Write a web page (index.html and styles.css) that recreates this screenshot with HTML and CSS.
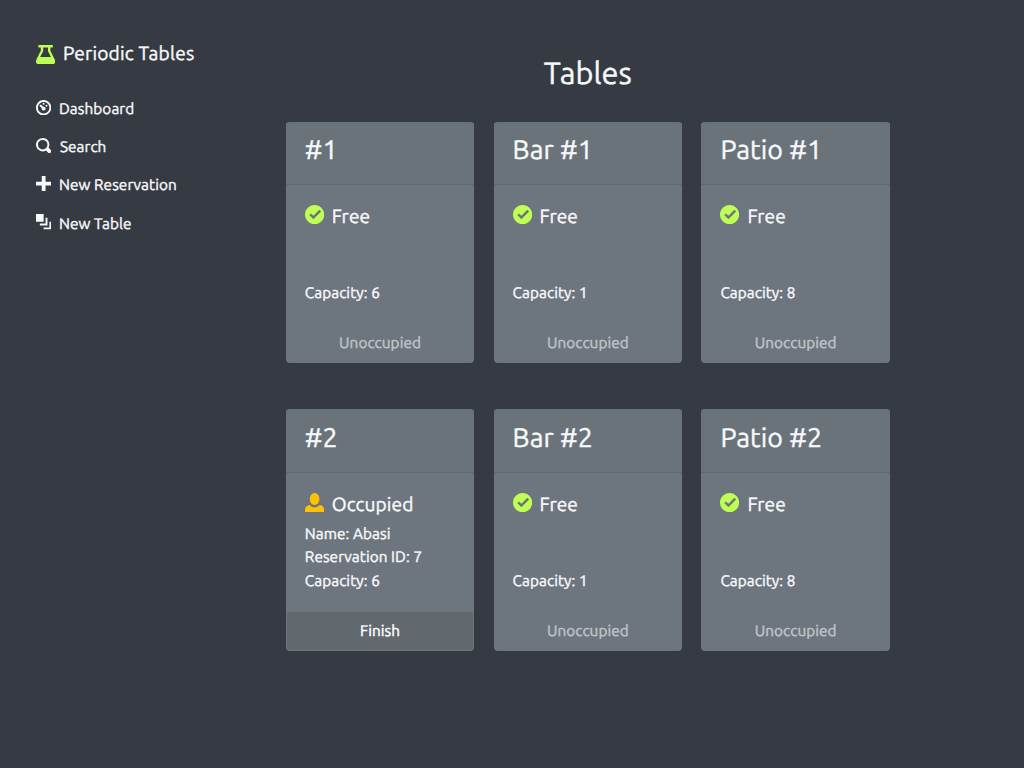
FILE: index.html
```
<!DOCTYPE html>
<html lang="en">
<head>
<meta charset="utf-8">
<title>Periodic Tables</title>
<link rel="stylesheet" href="styles.css">
</head>
<body>
<svg class="defs" aria-hidden="true">
  <symbol id="check" viewBox="0 0 8 8"><path fill-rule="evenodd" d="M4 0C1.790 0 0 1.790 0 4s1.790 4 4 4 4-1.790 4-4-1.790-4-4-4zm2 2l.72.720-3.220 3.220-1.720-1.720.72-.720 1 1z"/></symbol>
  <symbol id="person" viewBox="0 0 8 8"><path d="M4 0c-1.100 0-2 1.120-2 2.500s.9 2.500 2 2.500 2-1.120 2-2.500-.9-2.500-2-2.500zM1.910 5c-1.060.050-1.910.92-1.910 2v1h8v-1c0-1.080-.84-1.950-1.910-2-.54.610-1.280 1-2.090 1s-1.550-.39-2.090-1z"/></symbol>
</svg>
<div class="layout">
  <nav class="sidebar">
    <a class="brand"><svg class="icon-lg green" viewBox="0 0 8 8"><path fill-rule="evenodd" d="M1 0v1h1v1.410c-.28.550-1.440 2.890-1.780 3.560-.150.310-.22.640-.22 1.030 0 .550.450 1 1 1h6c.550 0 1-.450 1-1 0-.39-.070-.720-.22-1.030-.34-.67-1.500-3.010-1.780-3.560V1h1V0zm2 1h2v1.660l.060.090s.63 1.230 1.190 2.250h-4.500c.56-1.120 1.190-2.250 1.190-2.250l.060-.09z"/></svg><span>Periodic Tables</span></a>
    <a class="link"><svg class="icon" viewBox="0 0 8 8"><path d="M4 0C1.800 0 0 1.800 0 4s1.800 4 4 4 4-1.800 4-4-1.800-4-4-4zm0 1c1.660 0 3 1.340 3 3S5.660 7 4 7 1 5.660 1 4s1.340-3 3-3zm0 .5a.5.5 0 1 0 0 1 .5.5 0 0 0 0-1zM2.340 2.500a.5.500 0 0 0-.19.840l.9.910a1 1 0 1 0 .7-.700l-.91-.900a.5.5 0 0 0-.5-.15zM5.500 2.500a.5.5 0 1 0 0 1 .5.5 0 0 0 0-1z"/></svg><span>Dashboard</span></a>
    <a class="link search"><svg class="icon" viewBox="0 0 8 8"><path fill-rule="evenodd" d="M3.500 0a3.500 3.500 0 1 0 1.720 6.550l1.060 1.060A1 1 0 1 0 7.690 6.190L6.600 5.130A3.500 3.500 0 0 0 3.500 0zm0 1a2.500 2.500 0 1 1 0 5 2.500 2.500 0 0 1 0-5z"/></svg><span>Search</span></a>
    <a class="link"><svg class="icon" viewBox="0 0 8 8"><path d="M3 0v3H0v2h3v3h2V5h3V3H5V0z"/></svg><span>New Reservation</span></a>
    <a class="link"><svg class="icon" viewBox="0 0 8 8"><path d="M0 0v4h4V0zm5 2v3H2v1h4V2zm2 2v3H4v1h4V4z"/></svg><span>New Table</span></a>
  </nav>
  <main>
    <h1>Tables</h1>
    <div class="grid">
      <section class="card"><h2>#1</h2><div class="body"><h3><svg class="icon-lg green"><use href="#check"/></svg><span>Free</span></h3><p class="capacity">Capacity: 6</p></div><footer>Unoccupied</footer></section>
      <section class="card"><h2>Bar #1</h2><div class="body"><h3><svg class="icon-lg green"><use href="#check"/></svg><span>Free</span></h3><p class="capacity">Capacity: 1</p></div><footer>Unoccupied</footer></section>
      <section class="card"><h2>Patio #1</h2><div class="body"><h3><svg class="icon-lg green"><use href="#check"/></svg><span>Free</span></h3><p class="capacity">Capacity: 8</p></div><footer>Unoccupied</footer></section>
      <section class="card"><h2>#2</h2><div class="body"><h3><svg class="icon-lg amber"><use href="#person"/></svg><span>Occupied</span></h3><p>Name: Abasi</p><p>Reservation ID: 7</p><p class="capacity">Capacity: 6</p></div><footer class="finish">Finish</footer></section>
      <section class="card"><h2>Bar #2</h2><div class="body"><h3><svg class="icon-lg green"><use href="#check"/></svg><span>Free</span></h3><p class="capacity">Capacity: 1</p></div><footer>Unoccupied</footer></section>
      <section class="card"><h2>Patio #2</h2><div class="body"><h3><svg class="icon-lg green"><use href="#check"/></svg><span>Free</span></h3><p class="capacity">Capacity: 8</p></div><footer>Unoccupied</footer></section>
    </div>
  </main>
</div>
</body>
</html>
```
FILE: styles.css
```
* { box-sizing: border-box; }
body {
  margin: 0;
  height: 768px;
  overflow: hidden;
  background: #363a42;
  color: #f8f9fa;
  font: 15.320px/23px Ubuntu, "Noto Sans", sans-serif;
  text-rendering: geometricPrecision;
  letter-spacing: 0.07px;
  -webkit-text-stroke: 0.4px;
}
h1, h2, h3, p { margin: 0; font-weight: 400; }
.defs { display: none; }
.layout { display: flex; height: 768px; border-bottom: 1px solid #3b3742; }
.sidebar { width: 285.800px; padding: 38px 0 0 36px; }
.sidebar a { display: flex; align-items: center; white-space: nowrap; }
.icon { width: 15.300px; height: 15.300px; fill: #f8f9fa; flex: none; margin: 0 7.700px 2px 0; }
.icon-lg { width: 19.200px; height: 19.200px; flex: none; margin-right: 7.800px; }
.green { fill: #bfff55; }
.amber { fill: #ffc107; }
.brand { height: 32px; font-size: 19.150px; letter-spacing: 0.18px; margin-bottom: 19px; }
.brand .icon-lg { margin-top: 1px; }
.brand span { margin-bottom: 1px; }
.link { height: 38.300px; }
.search .icon { margin-right: 8.700px; }
h1 { height: 121.800px; padding-top: 54px; font-size: 30.640px; line-height: 38px; text-align: center; }
main { width: 604.200px; }
.grid {
  display: grid;
  grid-template-columns: repeat(3, 188.500px);
  grid-auto-rows: 241.500px;
  gap: 46px 19.300px;
}
.card {
  display: flex;
  flex-direction: column;
  overflow: hidden;
  border-radius: 4px;
  background: #6d757e;
}
h2 {
  height: 63.400px;
  padding: 10.500px 19px 0;
  border-bottom: 1px solid #5f676f;
  background: #6a737a;
  font-size: 26.810px;
  line-height: 36px;
}
.body { flex: 1; display: flex; flex-direction: column; padding: 19px 19px 20px; }
h3 { display: flex; align-items: center; height: 25px; margin-bottom: 5.500px; font-size: 19.150px; }
h3 .icon-lg { margin-bottom: 4px; }
.capacity { margin-top: auto; }
p { white-space: nowrap; }
footer { height: 38px; margin: 0 1px 1px; line-height: 38px; text-align: center; color: #c1c5c8; }
.finish { background: #61696f; color: #fff; border-radius: 2px 2px 3px 3px; }
```
